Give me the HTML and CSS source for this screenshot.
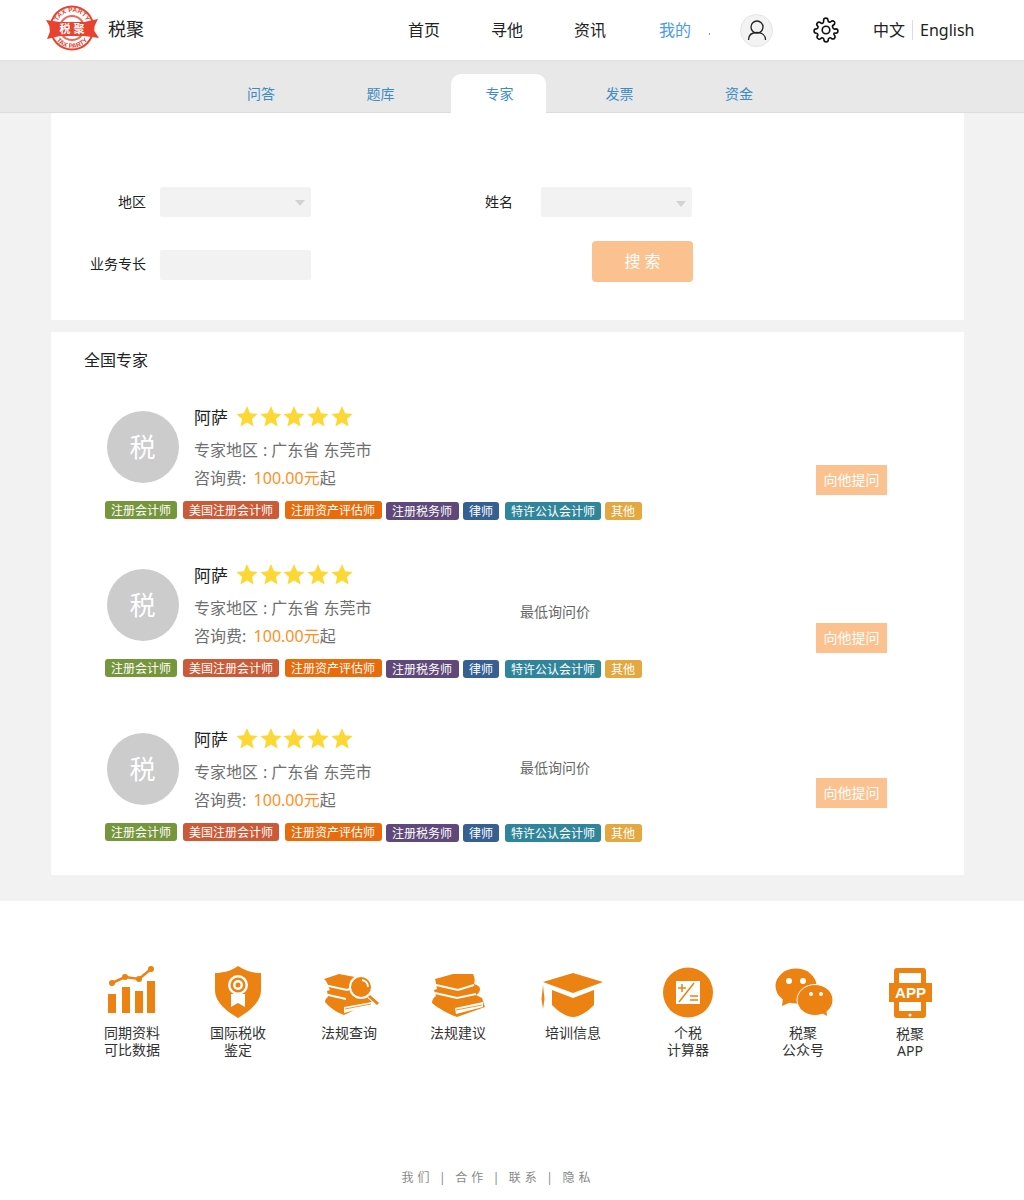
FILE: index.html
```html
<!DOCTYPE html>
<html lang="zh-CN">
<head>
    <meta charset="UTF-8">
    <meta name="viewport" content="width=device-width, initial-scale=1.0">
    <title>税聚 - 专家</title>
    <link rel="stylesheet" href="styles.css">
</head>
<body>
    <svg class="sprite" width="0" height="0">
        <symbol id="star" viewBox="0 0 24 22">
            <path d="M12 0l3.100 7.200 7.500.7-5.700 5 1.700 7.600L12 16.500l-6.600 4 1.700-7.600-5.700-5 7.500-.7z"/>
        </symbol>
    </svg>

    <!-- 顶部导航 -->
    <header class="topbar">
        <div class="brand">
            <svg class="brand-logo" width="56" height="50" viewBox="44 3 56 50">
                <defs>
                    <path id="arcTop" d="M56 28a16 16 0 0 1 32 0"/>
                    <path id="arcBottom" d="M52 28a20 20 0 0 0 40 0"/>
                </defs>
                <circle cx="72" cy="28" r="22.500" fill="#e8432f"/>
                <circle cx="72" cy="28" r="20.500" fill="#fff"/>
                <circle cx="72" cy="28" r="13" fill="#f0675a"/>
                <circle cx="72" cy="28" r="11" fill="#fff"/>
                <path d="M46 20l14 2h24l14-3-5 10 6 9-15-2H60l-13 3 4-10z" fill="#e8432f"/>
                <text class="logo-arc" fill="#e8432f"><textPath href="#arcTop" startOffset="50%" text-anchor="middle">TAX PARTY</textPath></text>
                <text class="logo-arc" fill="#e8432f"><textPath href="#arcBottom" startOffset="50%" text-anchor="middle">TAX PARTY</textPath></text>
                <text class="logo-name" x="72" y="33" text-anchor="middle" fill="#fff">税 聚</text>
            </svg>
            <span class="brand-name">税聚</span>
        </div>
        <nav class="mainnav">
            <a class="nav-home" href="#">首页</a>
            <a class="nav-find" href="#">寻他</a>
            <a class="nav-news" href="#">资讯</a>
            <a class="nav-mine" href="#">我的</a>
        </nav>
        <span class="nav-dot"></span>
        <span class="user-btn">
            <svg width="22" height="22" viewBox="0 0 22 22" fill="none" stroke="#222" stroke-width="1.300">
                <circle cx="11" cy="8" r="6"/>
                <path d="M2.500 21c0-5 3.500-7.500 8.500-7.500s8.500 2.500 8.500 7.500"/>
            </svg>
        </span>
        <svg class="gear" width="26" height="26" viewBox="0 0 24 24" fill="none" stroke="#111" stroke-width="1.500" stroke-linejoin="round">
            <circle cx="12" cy="12" r="3.500"/>
            <path d="M19.400 15a1.650 1.650 0 0 0 .33 1.820l.06.06a2 2 0 1 1-2.830 2.830l-.06-.06a1.650 1.650 0 0 0-2.800 1.170V21a2 2 0 1 1-4 0v-.09a1.650 1.650 0 0 0-2.800-1.110l-.06.06a2 2 0 1 1-2.830-2.830l.06-.06A1.650 1.650 0 0 0 3.090 15H3a2 2 0 1 1 0-4h.09a1.650 1.650 0 0 0 1.110-2.800l-.06-.06a2 2 0 1 1 2.830-2.830l.06.06A1.650 1.650 0 0 0 9.800 4.200V3a2 2 0 1 1 4 0v.09a1.650 1.650 0 0 0 2.800 1.110l.06-.06a2 2 0 1 1 2.830 2.830l-.06.06A1.650 1.650 0 0 0 20.910 11H21a2 2 0 1 1 0 4h-.09a1.650 1.650 0 0 0-1.510 0z"/>
        </svg>
        <div class="lang">
            <span class="lang-zh">中文</span>
            <span class="lang-en">English</span>
        </div>
    </header>

    <!-- 二级导航 -->
    <div class="subnav">
        <a class="tab" href="#">问答</a>
        <a class="tab" href="#">题库</a>
        <a class="tab active" href="#">专家</a>
        <a class="tab" href="#">发票</a>
        <a class="tab" href="#">资金</a>
    </div>

    <main class="content">
        <!-- 搜索 -->
        <form class="panel filter">
            <div class="filter-row first">
                <label class="field-label">地区</label>
                <div class="field select"></div>
                <label class="field-label name-label">姓名</label>
                <div class="field select name-select"></div>
            </div>
            <div class="filter-row second">
                <label class="field-label">业务专长</label>
                <div class="field"></div>
                <button class="search-btn" type="button">搜索</button>
            </div>
        </form>

        <!-- 专家列表 -->
        <section class="panel experts">
            <h2 class="list-title">全国专家</h2>

            <article class="expert">
                <div class="expert-main">
                    <div class="avatar">税</div>
                    <div class="expert-info">
                        <div class="expert-name">阿萨
                            <span class="stars">
                                <svg width="24" height="22"><use href="#star"/></svg>
                                <svg width="24" height="22"><use href="#star"/></svg>
                                <svg width="24" height="22"><use href="#star"/></svg>
                                <svg width="24" height="22"><use href="#star"/></svg>
                                <svg width="24" height="22"><use href="#star"/></svg>
                            </span>
                        </div>
                        <p class="expert-line">专家地区<span class="colon">:</span>广东省 东莞市</p>
                        <p class="expert-line">咨询费:&nbsp; <span class="fee">100.00元</span>起</p>
                    </div>
                    <span class="min-price"></span>
                    <a class="ask-btn" href="#">向他提问</a>
                </div>
                <div class="tags">
                    <span class="tag green">注册会计师</span>
                    <span class="tag red">美国注册会计师</span>
                    <span class="tag orange">注册资产评估师</span>
                    <span class="tag purple low">注册税务师</span>
                    <span class="tag blue low">律师</span>
                    <span class="tag teal low">特许公认会计师</span>
                    <span class="tag yellow low">其他</span>
                </div>
            </article>

            <article class="expert">
                <div class="expert-main">
                    <div class="avatar">税</div>
                    <div class="expert-info">
                        <div class="expert-name">阿萨
                            <span class="stars">
                                <svg width="24" height="22"><use href="#star"/></svg>
                                <svg width="24" height="22"><use href="#star"/></svg>
                                <svg width="24" height="22"><use href="#star"/></svg>
                                <svg width="24" height="22"><use href="#star"/></svg>
                                <svg width="24" height="22"><use href="#star"/></svg>
                            </span>
                        </div>
                        <p class="expert-line">专家地区<span class="colon">:</span>广东省 东莞市</p>
                        <p class="expert-line">咨询费:&nbsp; <span class="fee">100.00元</span>起</p>
                    </div>
                    <span class="min-price">最低询问价</span>
                    <a class="ask-btn" href="#">向他提问</a>
                </div>
                <div class="tags">
                    <span class="tag green">注册会计师</span>
                    <span class="tag red">美国注册会计师</span>
                    <span class="tag orange">注册资产评估师</span>
                    <span class="tag purple low">注册税务师</span>
                    <span class="tag blue low">律师</span>
                    <span class="tag teal low">特许公认会计师</span>
                    <span class="tag yellow low">其他</span>
                </div>
            </article>

            <article class="expert last">
                <div class="expert-main">
                    <div class="avatar">税</div>
                    <div class="expert-info">
                        <div class="expert-name">阿萨
                            <span class="stars">
                                <svg width="24" height="22"><use href="#star"/></svg>
                                <svg width="24" height="22"><use href="#star"/></svg>
                                <svg width="24" height="22"><use href="#star"/></svg>
                                <svg width="24" height="22"><use href="#star"/></svg>
                                <svg width="24" height="22"><use href="#star"/></svg>
                            </span>
                        </div>
                        <p class="expert-line">专家地区<span class="colon">:</span>广东省 东莞市</p>
                        <p class="expert-line">咨询费:&nbsp; <span class="fee">100.00元</span>起</p>
                    </div>
                    <span class="min-price">最低询问价</span>
                    <a class="ask-btn" href="#">向他提问</a>
                </div>
                <div class="tags">
                    <span class="tag green">注册会计师</span>
                    <span class="tag red">美国注册会计师</span>
                    <span class="tag orange">注册资产评估师</span>
                    <span class="tag purple low">注册税务师</span>
                    <span class="tag blue low">律师</span>
                    <span class="tag teal low">特许公认会计师</span>
                    <span class="tag yellow low">其他</span>
                </div>
            </article>
        </section>
    </main>

    <!-- 底部服务入口 -->
    <section class="services">
        <a class="service" href="#">
            <svg width="70" height="56" viewBox="97 962 70 56" fill="#ec8211">
                <rect x="108" y="994" width="8" height="19"/>
                <rect x="122" y="987" width="8" height="26"/>
                <rect x="135" y="991" width="8" height="22"/>
                <rect x="147" y="981" width="8" height="32"/>
                <path d="M112 983l13-6 14 2 12-10" fill="none" stroke="#ec8211" stroke-width="2.500"/>
                <circle cx="112" cy="983" r="3"/><circle cx="125" cy="977" r="3"/><circle cx="139" cy="979" r="3"/><circle cx="151" cy="969" r="3"/>
            </svg>
            <span>同期资料<br>可比数据</span>
        </a>
        <a class="service" href="#">
            <svg width="70" height="56" viewBox="203 962 70 56" fill="#ec8211">
                <path d="M238 966c-7 5-15 7-23 7v17c0 13 13 22 23 28 10-6 23-15 23-28v-17c-8 0-16-2-23-7z"/>
                <path d="M231 994h14v13l-7-4-7 4z" fill="#fff"/>
                <circle cx="238" cy="985" r="10" fill="#fff"/>
                <circle cx="238" cy="985" r="7.500"/>
                <circle cx="238" cy="985" r="5" fill="#fff"/>
                <circle cx="238" cy="985" r="2.500"/>
            </svg>
            <span>国际税收<br>鉴定</span>
        </a>
        <a class="service" href="#">
            <svg width="70" height="56" viewBox="316 962 70 56" fill="#ec8211">
                <path d="M326 979l15-5 16 3 6 10 10 13 1 2-28 13c-8-3-15-8-19-13 0-2 1-4 3-5l-1-6 3-1c-2-3-2-8-6-11z"/>
                <path d="M326 985l23 5 8-3M326 994l22 5" fill="none" stroke="#fff" stroke-width="2"/>
                <path d="M346 1007l28-5v4l-28 7z" fill="#fff"/>
                <path d="M347 1009l26-5" stroke="#ec8211" stroke-width=".8"/>
                <circle cx="363" cy="987" r="12" fill="#fff"/>
                <circle cx="363" cy="987" r="10"/>
                <path d="M364 980a7 7 0 0 1 6 7" fill="none" stroke="#fff" stroke-width="2"/>
                <path d="M371 996l9 8" stroke="#fff" stroke-width="5"/>
                <path d="M371 996l9 8" stroke="#ec8211" stroke-width="3"/>
            </svg>
            <span>法规查询</span>
        </a>
        <a class="service" href="#">
            <svg width="70" height="56" viewBox="423 962 70 56" fill="#ec8211">
                <path d="M435 979l18-5h20c2 3 2 7 1 10 4 1 6 3 6 5 0 3-2 5-4 6l6 3 3 9-28 10c-9-3-19-9-25-14 0-3 1-5 4-7l-2-6 3-1c-1-4-1-7-2-10z"/>
                <path d="M436 985l22 5 16-5M435 993l22 5 19-4" fill="none" stroke="#fff" stroke-width="2"/>
                <path d="M455 1008l28-6v5l-27 7z" fill="#fff"/>
                <path d="M456 1010l26-5" stroke="#ec8211" stroke-width=".8"/>
            </svg>
            <span>法规建议</span>
        </a>
        <a class="service" href="#">
            <svg width="70" height="56" viewBox="539 962 70 56" fill="#ec8211">
                <path d="M544 982l30-9 30 9-30 11z"/>
                <path d="M553 990l21 8 21-8v15c-6 6-14 12-21 12s-15-6-21-12z"/>
                <path d="M544 985l1.500 14-1.500 10-1.500-10z"/>
            </svg>
            <span>培训信息</span>
        </a>
        <a class="service" href="#">
            <svg width="70" height="56" viewBox="654 962 70 56" fill="#ec8211">
                <circle cx="689" cy="992.500" r="25"/>
                <rect x="677" y="981" width="24" height="23" fill="#fff"/>
                <path d="M683 984v8M679 988h8M695 983l-15 19M691 996h8M691 1000h8" fill="none" stroke="#ec8211" stroke-width="1.500"/>
            </svg>
            <span>个税<br>计算器</span>
        </a>
        <a class="service" href="#">
            <svg width="70" height="56" viewBox="768 962 70 56" fill="#ec8211">
                <ellipse cx="796" cy="986" rx="20.500" ry="17.500"/>
                <path d="M783 998l-1 8 9-4z"/>
                <ellipse cx="815" cy="1000" rx="18" ry="15.500" stroke="#fff"/>
                <path d="M820 1012l7 4-1-9z"/>
                <circle cx="789" cy="981" r="3" fill="#fff"/><circle cx="803" cy="981" r="3" fill="#fff"/>
                <circle cx="811" cy="994" r="2" fill="#fff"/><circle cx="821" cy="994" r="2" fill="#fff"/>
            </svg>
            <span>税聚<br>公众号</span>
        </a>
        <a class="service app" href="#">
            <svg width="70" height="56" viewBox="875 962 70 56" fill="#ec8211">
                <rect x="894" y="968" width="32" height="50" rx="3"/>
                <rect x="899" y="973" width="22" height="38" fill="#fff"/>
                <rect x="889" y="983" width="43" height="19"/>
                <circle cx="910" cy="1015" r="1.500" fill="#fff"/>
                <text class="app-text" x="910.500" y="998" text-anchor="middle" fill="#fff">APP</text>
            </svg>
            <span>税聚<br>APP</span>
        </a>
    </section>

    <footer class="footer">
        <a href="#">我们</a><i>|</i><a href="#">合作</a><i>|</i><a href="#">联系</a><i>|</i><a href="#">隐私</a>
    </footer>
</body>
</html>
```

FILE: styles.css
```css
* {
    box-sizing: border-box;
}
body {
    margin: 0;
    background-color: #fff;
    color: #222;
    font-family: "Noto Sans", "Noto Sans CJK SC", sans-serif;
}
a {
    color: inherit;
    text-decoration: none;
}
.sprite {
    display: block;
    height: 0;
}

/* 顶部导航 */
.topbar {
    display: flex;
    align-items: center;
    height: 61px;
    border-bottom: 1px solid #dedede;
}
.brand {
    display: flex;
    align-items: center;
    margin-left: 44px;
    width: 364px;
}
.brand-logo {
    display: block;
    margin-top: -4px;
}
.logo-arc {
    font-family: "Liberation Sans", sans-serif;
    font-size: 6.500px;
    font-weight: 700;
}
.logo-name {
    font-size: 11px;
    font-weight: 700;
}
.brand-name {
    margin-left: 8px;
    font-size: 18px;
    line-height: 24px;
    margin-top: -3px;
}
.mainnav {
    display: flex;
    font-size: 16px;
    line-height: 22px;
}
.nav-find,
.nav-news {
    margin-left: 51px;
}
.nav-mine {
    margin-left: 53px;
    color: #4a9be8;
}
.nav-dot {
    width: 1px;
    height: 2px;
    margin: 8px 0 0 18px;
    background: #999;
}
.user-btn {
    display: flex;
    align-items: center;
    justify-content: center;
    width: 33px;
    height: 33px;
    margin-left: 30px;
    border: 1px solid #e4e4e4;
    border-radius: 50%;
    background: #f3f3f3;
}
.gear {
    margin-left: 40px;
}
.lang {
    display: flex;
    align-items: center;
    margin-left: 34px;
    font-size: 16px;
    line-height: 20px;
}
.lang-zh {
    padding-right: 7px;
    border-right: 1px solid #ddd;
}
.lang-en {
    padding-left: 7px;
}

/* 二级导航 */
.subnav {
    display: flex;
    align-items: flex-end;
    gap: 24.500px;
    height: 52px;
    padding-left: 213.500px;
    background: #e8e8e8;
    border-bottom: 1px solid #dcdcdc;
}
.tab {
    width: 95px;
    height: 38px;
    font-size: 14px;
    line-height: 40px;
    text-align: center;
    color: #3b8bc4;
}
.tab.active {
    height: 39px;
    margin: 0 2px -1px -2px;
    padding-left: 3px;
    background: #fff;
    border-radius: 10px 10px 0 0;
}

/* 内容区 */
.content {
    padding: 0 60px 26px 51px;
    background: #f2f2f2;
}
.panel {
    background: #fff;
}
.filter {
    height: 207px;
    padding-top: 74px;
    margin-bottom: 12px;
}
.filter-row {
    display: flex;
    align-items: flex-start;
}
.filter-row.first {
    height: 54px;
}
.field-label {
    width: 95px;
    margin-right: 14px;
    font-size: 14px;
    line-height: 30px;
    text-align: right;
    color: #222;
}
.field {
    position: relative;
    width: 151px;
    height: 30px;
    border-radius: 2px;
    background: #f2f2f2;
}
.select::after {
    content: "";
    position: absolute;
    right: 6px;
    top: 13px;
    border: 5px solid transparent;
    border-top: 6px solid #d2d2d2;
    border-bottom: 0;
}
.name-label {
    width: 28px;
    margin: 0 28px 0 174px;
}
.name-select::after {
    top: 14px;
}
.filter-row.second .field {
    margin-top: 9px;
}
.filter-row.second .field-label {
    margin-top: 8px;
}
.search-btn {
    width: 101px;
    height: 41px;
    margin-left: 281px;
    padding: 0 0 4px;
    border: none;
    border-radius: 4px;
    background: #fbc290;
    color: #fff;
    font-family: inherit;
    font-size: 16px;
    letter-spacing: 4px;
    text-indent: 4px;
}

/* 专家列表 */
.experts {
    height: 543px;
    padding: 16px 0 0 54px;
}
.list-title {
    margin: 0 0 0 -21px;
    font-size: 16px;
    font-weight: 400;
    line-height: 24px;
    color: #222;
}
.expert {
    height: 158px;
    padding-top: 33px;
}
.expert.last {
    height: 150px;
    padding-top: 39px;
}
.expert-main {
    display: flex;
    align-items: flex-start;
    min-height: 90px;
}
.avatar {
    flex: none;
    width: 72px;
    height: 72px;
    margin: 6px 0 0 1.500px;
    border-radius: 50%;
    background: #ccc;
    color: #fff;
    font-size: 26px;
    line-height: 72px;
    text-align: center;
}
.expert-info {
    width: 326px;
    margin-left: 15.500px;
}
.expert-name {
    display: flex;
    align-items: center;
    height: 26px;
    font-size: 17px;
    line-height: 26px;
    color: #222;
}
.stars {
    display: flex;
    margin-left: 7px;
    margin-top: -2px;
}
.stars svg {
    display: block;
    margin-right: -.300px;
    fill: #fdd835;
}
.expert-line {
    margin: 9px 0 0;
    font-size: 16px;
    line-height: 21px;
    color: #6f6f6f;
}
.expert-line + .expert-line {
    margin-top: 7px;
}
.colon {
    margin: 0 4px 0 5px;
}
.fee {
    margin-left: -1px;
    color: #ff8f1f;
}
.min-price {
    width: 296px;
    margin-top: 39px;
    font-size: 14px;
    line-height: 20px;
    color: #666;
}
.ask-btn {
    width: 71px;
    height: 30px;
    margin-top: 60px;
    background: #fbc290;
    color: #fff;
    font-size: 14px;
    line-height: 30px;
    text-align: center;
}
.expert.last .min-price {
    margin-top: 31px;
}
.expert.last .ask-btn {
    margin-top: 51px;
}
.tags {
    display: flex;
    align-items: flex-start;
    margin-top: 6px;
}
.tag {
    height: 18px;
    margin-right: 6px;
    padding: 0 6px;
    border-radius: 3px;
    color: #fff;
    font-size: 12px;
    line-height: 19px;
    white-space: nowrap;
}
.tag.low {
    margin-top: 1px;
    margin-right: 4px;
}
.tag.orange,
.tag.purple,
.tag.yellow {
    padding-right: 7px;
    margin-right: 4px;
}
.tag.blue {
    margin-right: 6px;
}
.green { background: #76963c; }
.red { background: #cc5a36; }
.orange { background: #e96c0c; }
.purple { background: #5f497a; }
.blue { background: #376092; }
.teal { background: #31859b; }
.yellow { background: #e3a840; }

/* 底部服务入口 */
.services {
    display: grid;
    grid-template-columns: 100px 112px 110px 108px 122px 108px 122px 92px;
    height: 260px;
    padding: 61px 0 0 82px;
}
.service {
    display: flex;
    flex-direction: column;
    align-items: center;
    font-size: 14px;
    line-height: 17px;
    text-align: center;
    color: #333;
}
.service svg {
    display: block;
    margin-bottom: 6px;
}
.service.app span {
    padding-top: 1px;
}
.app-text {
    font-family: "Liberation Sans", sans-serif;
    font-size: 15px;
    font-weight: 700;
}

.footer {
    display: flex;
    justify-content: center;
    gap: 5.500px;
    height: 39px;
    padding: 9px 28px 0 0;
    font-size: 12px;
    line-height: 16px;
    letter-spacing: 4px;
    color: #888;
}
.footer i {
    font-style: normal;
}
```
